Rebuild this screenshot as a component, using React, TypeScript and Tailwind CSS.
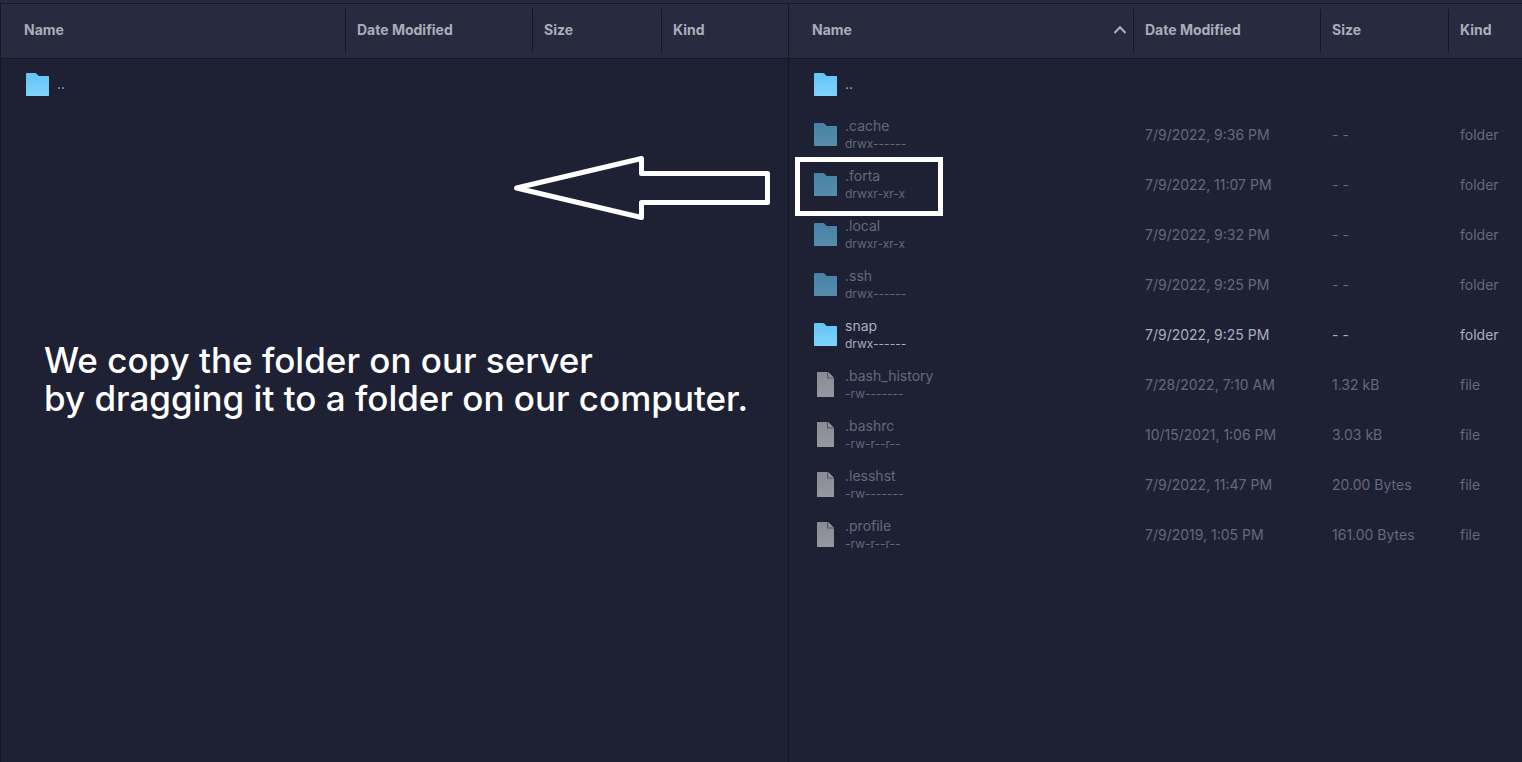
type Entry = {
  name: string;
  mode?: string;
  date?: string;
  size?: string;
  kind: 'folder' | 'file';
  dim?: boolean;
  parent?: boolean;
};

const parentEntry: Entry = { name: '..', kind: 'folder', parent: true };

const remoteEntries: Entry[] = [
  parentEntry,
  { name: '.cache', mode: 'drwx------', date: '7/9/2022, 9:36 PM', size: '- -', kind: 'folder', dim: true },
  { name: '.forta', mode: 'drwxr-xr-x', date: '7/9/2022, 11:07 PM', size: '- -', kind: 'folder', dim: true },
  { name: '.local', mode: 'drwxr-xr-x', date: '7/9/2022, 9:32 PM', size: '- -', kind: 'folder', dim: true },
  { name: '.ssh', mode: 'drwx------', date: '7/9/2022, 9:25 PM', size: '- -', kind: 'folder', dim: true },
  { name: 'snap', mode: 'drwx------', date: '7/9/2022, 9:25 PM', size: '- -', kind: 'folder' },
  { name: '.bash_history', mode: '-rw-------', date: '7/28/2022, 7:10 AM', size: '1.32 kB', kind: 'file', dim: true },
  { name: '.bashrc', mode: '-rw-r--r--', date: '10/15/2021, 1:06 PM', size: '3.03 kB', kind: 'file', dim: true },
  { name: '.lesshst', mode: '-rw-------', date: '7/9/2022, 11:47 PM', size: '20.00 Bytes', kind: 'file', dim: true },
  { name: '.profile', mode: '-rw-r--r--', date: '7/9/2019, 1:05 PM', size: '161.00 Bytes', kind: 'file', dim: true },
];

function FolderIcon() {
  return (
    <svg viewBox="0 0 24 24" className="size-6 shrink-0" aria-hidden="true">
      <defs>
        <linearGradient id="folder" x1="0" y1="0" x2="0" y2="1">
          <stop offset="0" stopColor="#62c4f6" />
          <stop offset="1" stopColor="#80d3fc" />
        </linearGradient>
      </defs>
      <path
        d="M1 1H8.800c.6 0 1.100.2 1.500.5L12.200 3.400c.4.4.8.6 1.300.6H22c.6 0 1 .4 1 1V23c0 .6-.4 1-1 1H1c-.6 0-1-.4-1-1V2c0-.6.4-1 1-1z"
        fill="url(#folder)"
      />
    </svg>
  );
}

function FileIcon() {
  return (
    <svg viewBox="0 0 24 26" className="h-[26px] w-6 shrink-0" aria-hidden="true">
      <defs>
        <linearGradient id="file" x1="0" y1="0" x2="0" y2="1">
          <stop offset="0" stopColor="#d2d2d4" />
          <stop offset="1" stopColor="#e6e6e8" />
        </linearGradient>
      </defs>
      <path d="M3 1H14L20 7V26H3z" fill="url(#file)" />
      <path d="M13 1V7.500H20V7z" fill="#787a88" />
      <path d="M14.200 1.200L19.700 6.600H14.200z" fill="#dcdcde" />
    </svg>
  );
}

function Chevron() {
  return (
    <svg viewBox="0 0 14 10" className="h-[10px] w-[14px]" aria-hidden="true">
      <path d="M1.500 8L7 2.300L12.500 8" fill="none" stroke="#adb2bf" strokeWidth="2" />
    </svg>
  );
}

type PaneProps = {
  label: string;
  entries: Entry[];
  sizeCol: string;
  kindCol: string;
  sorted?: boolean;
};

function FilePane({ label, entries, sizeCol, kindCol, sorted }: PaneProps) {
  const heads = ['Name', 'Date Modified', 'Size', 'Kind'];
  return (
    <table aria-label={label} className="w-full table-fixed border-separate border-spacing-0 text-left">
      <colgroup>
        <col />
        <col className="w-[187px]" />
        <col className={sizeCol} />
        <col className={kindCol} />
      </colgroup>
      <thead className="bg-[#282b3f]">
        <tr>
          {heads.map((head, i) => (
            <th key={head} className="h-[55px] border-b border-[#14162a] p-0 font-bold text-[#a9aebb]">
              <div
                className={`flex h-11 items-center justify-between pb-0.5 text-sm ${
                  i === 0 ? 'pl-[23px] pr-[6px]' : 'pl-[11px]'
                } ${i < 3 ? 'border-r border-[#14162a]' : ''}`}
              >
                {head}
                {i === 0 && sorted && <Chevron />}
              </div>
            </th>
          ))}
        </tr>
      </thead>
      <tbody>
        {entries.map((e) => (
          <tr key={e.name} className={e.dim ? 'text-[#64687a]' : 'text-[#a9aebb]'}>
            <td className="h-[50px] p-0">
              <div className="flex items-center gap-[7px] pl-[25px]">
                <span className={e.dim ? 'opacity-60' : ''}>{e.kind === 'folder' ? <FolderIcon /> : <FileIcon />}</span>
                <div className="flex flex-col">
                  <span className="text-sm leading-5">{e.name}</span>
                  {e.mode && <span className="text-xs leading-4">{e.mode}</span>}
                </div>
              </div>
            </td>
            <td className="p-0 pl-[11px] pt-0.5 text-sm">{e.date}</td>
            <td className="p-0 pl-[11px] pt-0.5 text-sm">{e.size}</td>
            <td className="p-0 pl-[11px] pt-0.5 text-sm">{e.parent ? '' : e.kind}</td>
          </tr>
        ))}
      </tbody>
    </table>
  );
}

export default function App() {
  return (
    <main className="flex min-h-screen flex-col bg-[#1e2133] font-['Inter',sans-serif]">
      <div className="h-1 border-b border-[#14162a] bg-[#282b3f]" />
      <div className="grid grow grid-cols-[minmax(0,789fr)_minmax(0,733fr)]">
        <section className="relative border-x border-[#14162a]">
          <FilePane label="Local files" entries={[parentEntry]} sizeCol="w-[129px]" kindCol="w-[126px]" />
          <svg viewBox="0 0 258 66" className="absolute right-[17px] top-[151px] h-[66px] w-[258px]" aria-hidden="true">
            <path
              d="M3.500 33L128.500 3.500V18.500H254.500V47.500H128.500V62.500Z"
              fill="none"
              stroke="#fff"
              strokeWidth="5"
              strokeLinejoin="round"
            />
          </svg>
          <p className="absolute left-[43px] top-[337px] whitespace-nowrap text-[35px] font-medium leading-[38px] text-white">
            We copy the folder on our server
            <br />
            by dragging it to a folder on our computer.
          </p>
        </section>
        <section className="relative">
          <FilePane label="Server files" entries={remoteEntries} sizeCol="w-[128px]" kindCol="w-[73px]" sorted />
          <div className="absolute left-[6px] top-[153px] h-[59px] w-[148px] border-[5px] border-white" />
        </section>
      </div>
    </main>
  );
}
